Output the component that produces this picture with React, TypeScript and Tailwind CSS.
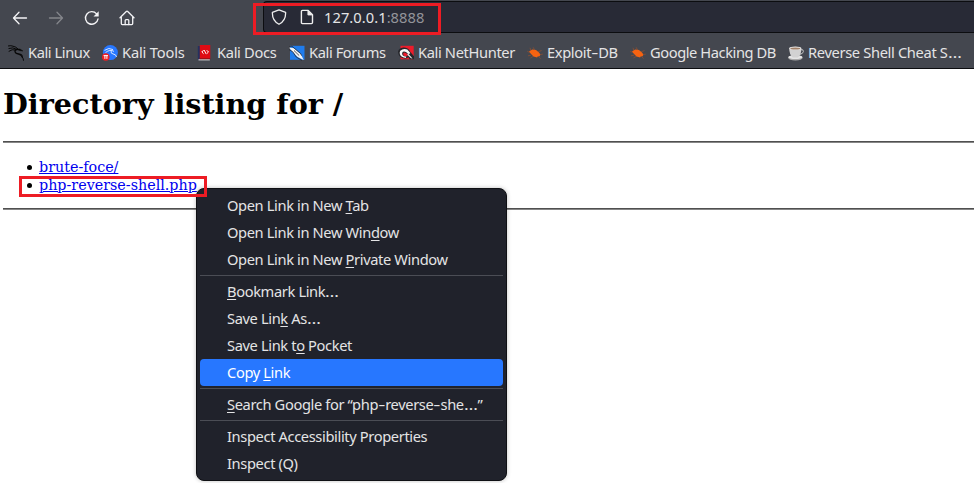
import { Fragment } from "react";
import type { ReactNode } from "react";

const ui = "font-['Noto_Sans','Open_Sans',sans-serif]";

function Back({ flip = false }: { flip?: boolean }) {
  return (
    <svg viewBox="0 0 16 16" className={"h-4 w-4 " + (flip ? "-scale-x-100 text-[#84868b]" : "text-[#f4f4f6]")} fill="none" stroke="currentColor" strokeWidth="1.3" strokeLinecap="round" strokeLinejoin="round">
      <path d="M7 2.3 1.5 8 7 13.7M1.9 8h12.6" />
    </svg>
  );
}

function Reload() {
  return (
    <svg viewBox="0 0 16 16" className="h-4 w-4" fill="none" stroke="#f4f4f6" strokeWidth="1.4" strokeLinecap="round">
      <path d="M12.6 3.9A6.3 6.3 0 1 0 14 9" />
      <path d="M14.7 1.2v5.2H9.5z" fill="#f4f4f6" stroke="none" />
    </svg>
  );
}

function Home() {
  return (
    <svg viewBox="0 0 16 16" className="-ml-px h-4 w-4" fill="none" stroke="#f4f4f6" strokeWidth="1.3" strokeLinecap="round" strokeLinejoin="round">
      <path d="M1 7.8 7.3 1.5q.7-.7 1.4 0L15 7.8M2.3 6.8v6.8q0 1 1 1h9.4q1 0 1-1V6.8" />
      <path d="M6.2 14.5v-4q0-.9.9-.9h1.8q.9 0 .9.9v4" />
    </svg>
  );
}

function Dragon() {
  return (
    <svg viewBox="0 0 16 16" className="h-4 w-4" fill="none" stroke="#080808" strokeLinecap="round" strokeLinejoin="round">
      <path d="M.4.9Q3 .3 5 1.2 8 1.6 10 4M.9 3.4Q4.8 1.8 8.8 4.3M1 6.2Q3.8 3.8 8 5" strokeWidth="1" />
      <path d="M9.5 4.4Q6.8 4.6 7 6.6 7.4 8.6 10.6 9 14.6 9.6 14.2 12" strokeWidth="1.3" />
      <path d="M11 9.4Q15.4 11.4 15.5 15.3" strokeWidth="1" />
      <path d="M9 3.9 12 4l2.9 2-2.4-.3-2.5-.8z" fill="#080808" strokeWidth=".5" />
    </svg>
  );
}

function Tools() {
  return (
    <svg viewBox="0 0 16 16" className="h-4 w-4">
      <circle cx="8.4" cy="7.6" r="7.5" fill="#2777ff" />
      <path d="M2.5 5.4Q7 2 11 4.6M3.5 7.6Q8 3.9 12 6.4M9.2 6Q8.4 8.6 11 8.9 14 9.3 14.6 12" fill="none" stroke="#e8f0ff" strokeWidth=".9" />
      <circle cx="3.8" cy="12" r="3.8" fill="#ed2024" />
      <path d="M1.6 10.6h4.4M2.9 10.6v3.3M4.9 10.6v3.3" stroke="#fff" strokeWidth="1" />
    </svg>
  );
}

function Docs() {
  return (
    <svg viewBox="0 0 16 16" className="h-4 w-4">
      <path d="M.8 1h3v14.3H2q-1.2 0-1.2-1.4z" fill="#24315f" />
      <path d="M2.8 0h10.5v13.3H2.8z" fill="#df0b14" />
      <path d="M1.5 14.2h11.3v1.2H1.5z" fill="#d5d5d5" />
      <path d="M2.5 13.1h10.8v1.1H2.5z" fill="#a60c13" />
      <path d="M6.6 5.2 4.8 7l1.8 1.7M9.7 5.2 11.5 7 9.7 8.7M7.2 5.1l1.9 3.8" fill="none" stroke="#fff" strokeWidth="1" />
    </svg>
  );
}

function Forums() {
  return (
    <svg viewBox="0 0 16 16" className="h-4 w-4">
      <path d="M1 .8h14.5v14H1z" fill="#1f7ced" />
      <path d="m0 2.6 5 .6 6.8 6 2.9 5.8-6-3L3.4 6.7z" fill="#f5f5f5" />
      <path d="m0 2 3-.8L5 3l6.5 5.4 1.2 2.2M0 4.6l3.8 2.2 3.4 5.2 5.8 3.5M5 5.5l5.2 5.1" fill="none" stroke="#292b31" strokeWidth=".8" />
    </svg>
  );
}

function Hunter() {
  return (
    <svg viewBox="0 0 16 16" className="h-4 w-4">
      <path d="M2.5.8h13.2v13.5H2.5z" fill="#ed1c2b" />
      <path d="M0 6.8Q1 3 5.2 2.5q4.8-.3 7 4.2l3.8 4.6v2.9h-4.2L10 12.1q.2 1.6-3.1 1.4Q1 12.8.4 8.8z" fill="#25262b" />
      <path d="M2.2 5.8Q5.5 3 9.3 4.6l3 3.4-1.4 1.2-3-2.2Q5 5.9 4.1 8q-.4 2.4 2 3.2l2.2.4-.4 1.3Q3 12.6 1.9 9.3q-.5-2 .3-3.5z" fill="#f8f8f8" />
      <path d="M5.2 8Q7 6.5 9.4 9.2l.4 1.6Q6.6 12 5.4 10z" fill="#ed1c2b" />
      <path d="m9.8 8.2 4.7 5.3-1.5-.2-3.6-3.5z" fill="#f8f8f8" />
    </svg>
  );
}

function Bug() {
  return (
    <svg viewBox="0 0 16 16" className="h-4 w-4">
      <path d="M4 5.8 3 2.8M7.5 5 6.2 2.3M2.5 7.5.2 6.2M4 10.2l-3 .6M6.5 11.2 3.4 13M11 7l3.5-1.5M13 9.6l2.8-.5M11.8 11.8l1.8 1.8" stroke="#94502f" strokeWidth=".7" />
      <path d="M2 6.5 5.2 4.4 9 4.9l3.5 3 .8 2-.7 1.4-2 .1-.5 1-3.6-1L3.6 8.6z" fill="#f66311" />
    </svg>
  );
}

function Cup() {
  return (
    <svg viewBox="0 0 16 16" className="h-4 w-4">
      <ellipse cx="7.4" cy="12.8" rx="7.3" ry="2.6" fill="#a9a9a9" />
      <ellipse cx="7.4" cy="12.2" rx="7" ry="1.9" fill="#e4e4e4" />
      <path d="M12.4 4.6q3.5-.5 3 2-.4 2.2-3.6 2.8" fill="none" stroke="#c5c5c5" strokeWidth="1" />
      <path d="M1.2 3.2h12.2q0 6.7-3.6 9.4H4.8Q1.3 9.9 1.2 3.2z" fill="#d2d2d2" />
      <ellipse cx="7.3" cy="3.3" rx="6.1" ry="1.7" fill="#eeeeee" />
      <ellipse cx="7.3" cy="3.5" rx="5" ry="1" fill="#a08068" />
    </svg>
  );
}

// Widens hyphens and ellipses inside tightly tracked labels.
function Label({ children }: { children: string }) {
  return (
    <>
      {children.split(/([-…])/).map((part, i) => {
        if (part === "-") return <span key={i} className="inline-block origin-center scale-x-150 px-[1.4px]">-</span>;
        if (part === "…") return <span key={i} className="inline-block origin-left scale-x-120 pr-[2.5px]">…</span>;
        return <Fragment key={i}>{part}</Fragment>;
      })}
    </>
  );
}

const bookmarks: { label: string; icon: ReactNode; box: string }[] = [
  { label: "Kali Linux", icon: <Dragon />, box: "w-[94px] tracking-[-0.42px]" },
  { label: "Kali Tools", icon: <Tools />, box: "w-[95px] tracking-[-0.17px]" },
  { label: "Kali Docs", icon: <Docs />, box: "w-[92px] tracking-[-0.33px]" },
  { label: "Kali Forums", icon: <Forums />, box: "w-[109px] tracking-[-0.4px]" },
  { label: "Kali NetHunter", icon: <Hunter />, box: "w-[129px] tracking-[-0.36px]" },
  { label: "Exploit-DB", icon: <Bug />, box: "w-[103px] tracking-[-0.37px]" },
  { label: "Google Hacking DB", icon: <Bug />, box: "w-[158px] tracking-[-0.42px]" },
  { label: "Reverse Shell Cheat S…", icon: <Cup />, box: "w-[182px] tracking-[-0.34px]" },
];

function Item({ children, active = false }: { children: ReactNode; active?: boolean }) {
  return (
    <div className={"flex h-[27px] items-center whitespace-pre rounded-[4px] pb-[2px] pl-[27px] " + (active ? "bg-[#2777ff] text-white" : "")}>
      <span>{children}</span>
    </div>
  );
}

function Key({ children }: { children: ReactNode }) {
  return <span className="underline decoration-1 underline-offset-2">{children}</span>;
}

function Separator() {
  return <div className="my-[2px] h-px bg-[#4b4d55]" />;
}

function Entry({ name }: { name: string }) {
  return (
    <li className="flex items-center">
      <span className="mt-px mr-[7px] h-[5px] w-[5px] rounded-full bg-black" />
      <a className="underline">{name}</a>
    </li>
  );
}

export default function App() {
  return (
    <div className="relative h-[483px] w-[974px] overflow-hidden bg-white">
      <header className={"h-[69px] border-b border-[#0c0d10] bg-[#44474f] text-[14.67px] text-[#e4e4e5] " + ui}>
        <div className="flex h-[37px] items-start pl-3">
          <nav className="flex w-[124px] gap-5 pt-[10px]">
            <Back />
            <Back flip />
            <Reload />
            <Home />
          </nav>
          <div className="ml-[127px] mt-px flex h-8 flex-1 items-center rounded-l-[4px] border border-r-0 border-[#0c0d10] bg-[#282a36] pl-[7px]">
            <svg viewBox="0 0 16 16" className="h-4 w-4" fill="none" stroke="#eeeeee" strokeWidth="1.3" strokeLinejoin="round">
              <path d="M8 .8 14.6 3.3Q15 11.5 8 15.3 1 11.5 1.4 3.3z" />
            </svg>
            <svg viewBox="0 0 16 16" className="ml-3 h-4 w-4" fill="none" stroke="#eeeeee" strokeWidth="1.4" strokeLinejoin="round">
              <path d="M3.4 1.4h5.8l4.3 4.3v7.9q0 1-1 1H3.4q-1 0-1-1V2.4q0-1 1-1z" />
              <path d="M8.9 1.6v4.4h4.3z" fill="#eeeeee" strokeWidth=".8" />
            </svg>
            <span className="ml-[9px] tracking-[0.06px]">127.0.0.1<span className="text-[#93949a]">:8888</span></span>
          </div>
        </div>
        <div className="flex h-8 items-center pl-2">
          {bookmarks.map((b) => (
            <div key={b.label} className={"flex shrink-0 items-center gap-1 whitespace-nowrap " + b.box}>
              {b.icon}
              <span className="-mt-[2px]"><Label>{b.label}</Label></span>
            </div>
          ))}
        </div>
      </header>

      <main className="pl-[3px] font-['DejaVu_Serif',serif] text-black">
        <h1 className="h-[53px] pt-[18px] text-[28.65px] leading-[35px] font-bold">Directory listing for /</h1>
        <hr className="mt-[19px] h-[2px] border-0 border-t border-[#505050] bg-[#868686]" />
        <ul className="mt-[15px] pl-6 text-[14.3px] leading-[18px] text-[#0000ee]">
          <Entry name="brute-foce/" />
          <Entry name="php-reverse-shell.php" />
        </ul>
        <hr className="mt-[14px] h-[2px] border-0 border-t border-[#505050] bg-[#868686]" />
      </main>

      <div className={"absolute left-[196px] top-[188px] h-[293px] w-[311px] rounded-[8px] border border-[#0f1014] bg-[#20222b] p-[3px] text-[14.67px] tracking-[-0.37px] text-[#e4e4e5] shadow-[0_0_4px_rgba(0,0,0,0.25)] " + ui}>
        <Item>Open Link in New <Key>T</Key>ab</Item>
        <Item>Open Link in New Win<Key>d</Key>ow</Item>
        <Item>Open Link in New <Key>P</Key>rivate Window</Item>
        <Separator />
        <Item><Key>B</Key><Label>ookmark Link…</Label></Item>
        <Item>Save Lin<Key>k</Key><Label> As…</Label></Item>
        <Item>Save Link t<Key>o</Key> Pocket</Item>
        <Item active>Copy <Key>L</Key>ink</Item>
        <Separator />
        <Item><Key>S</Key><Label>earch Google for “php-reverse-she…”</Label></Item>
        <Separator />
        <Item>Inspect Accessibility Properties</Item>
        <Item>Inspect (Q)</Item>
      </div>

      <div className="absolute left-[253px] top-[3px] h-8 w-[188px] border-[3px] border-[#ed1c24]" />
      <div className="absolute left-[19px] top-[176px] h-[21px] w-[188px] border-[3px] border-[#ed1c24]" />
    </div>
  );
}
